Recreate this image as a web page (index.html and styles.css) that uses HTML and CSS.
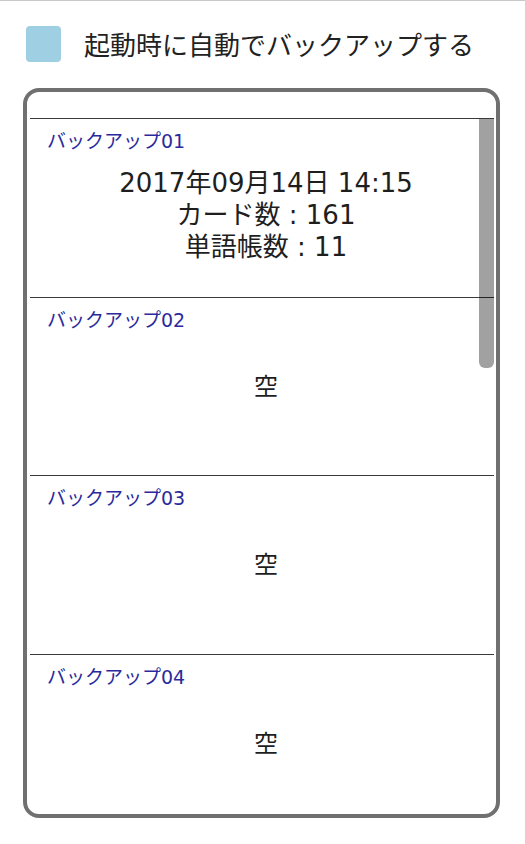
FILE: index.html
```html
<!DOCTYPE html>
<html lang="ja">
<head>
<meta charset="utf-8">
<title>バックアップ</title>
<link rel="stylesheet" href="styles.css">
</head>
<body>
<div class="page">
  <div class="auto-row">
    <span class="check"></span>
    <span class="auto-label">起動時に自動でバックアップする</span>
  </div>
  <div class="panel">
    <div class="panel-head"></div>
    <div class="list">
      <div class="slot">
        <div class="slot-name">バックアップ01</div>
        <div class="slot-body data">
          <div>2017年09月14日 14:15</div>
          <div>カード数 : 161</div>
          <div>単語帳数 : 11</div>
        </div>
      </div>
      <div class="slot">
        <div class="slot-name">バックアップ02</div>
        <div class="slot-body"><div class="empty">空</div></div>
      </div>
      <div class="slot">
        <div class="slot-name">バックアップ03</div>
        <div class="slot-body"><div class="empty">空</div></div>
      </div>
      <div class="slot">
        <div class="slot-name">バックアップ04</div>
        <div class="slot-body"><div class="empty">空</div></div>
      </div>
      <div class="thumb"></div>
    </div>
  </div>
</div>
</body>
</html>
```
FILE: styles.css
```css
html, body {
  margin: 0;
  padding: 0;
  background: #ffffff;
}
body {
  font-family: "DejaVu Sans", "Noto Sans CJK JP", sans-serif;
  color: #1e1e1e;
}
.page {
  width: 525px;
  height: 844px;
  box-sizing: border-box;
  border-top: 1px solid #c8c8c8;
  overflow: hidden;
}
.auto-row {
  display: flex;
  align-items: center;
  gap: 23px;
  padding: 25px 0 0 26px;
}
.check {
  width: 35px;
  height: 36px;
  border-radius: 4px;
  background: #9fcfe2;
  flex: none;
}
.auto-label {
  font-family: "Noto Sans CJK JP", sans-serif;
  font-size: 26px;
  line-height: 36px;
  color: #222222;
}
.panel {
  margin: 26px 0 0 23px;
  width: 477px;
  height: 730px;
  box-sizing: border-box;
  border: 4px solid #707070;
  border-radius: 16px;
  padding: 0 2px 0 3px;
  display: flex;
  flex-direction: column;
  overflow: hidden;
}
.panel-head {
  height: 26px;
  flex: none;
}
.list {
  position: relative;
  flex: 1;
  overflow: hidden;
  border-top: 1px solid #3a3a3a;
}
.slot {
  height: 177.7px;
  border-bottom: 1px solid #3a3a3a;
  display: flex;
  flex-direction: column;
}
.slot-name {
  padding: 10px 0 0 17px;
  font-size: 19px;
  line-height: 24px;
  color: #2a2a9c;
}
.slot-body {
  flex: 1;
  display: flex;
  flex-direction: column;
  align-items: center;
  justify-content: center;
  padding: 0 0 34px 8px;
}
.slot-body.data {
  padding-top: 14px;
  font-size: 26px;
  line-height: 32px;
}
.empty {
  font-size: 24px;
  line-height: 32px;
}
.thumb {
  position: absolute;
  top: 0;
  right: 0;
  width: 15px;
  height: 249px;
  background: rgba(0, 0, 0, 0.37);
  border-radius: 0 0 6px 6px;
}
```
